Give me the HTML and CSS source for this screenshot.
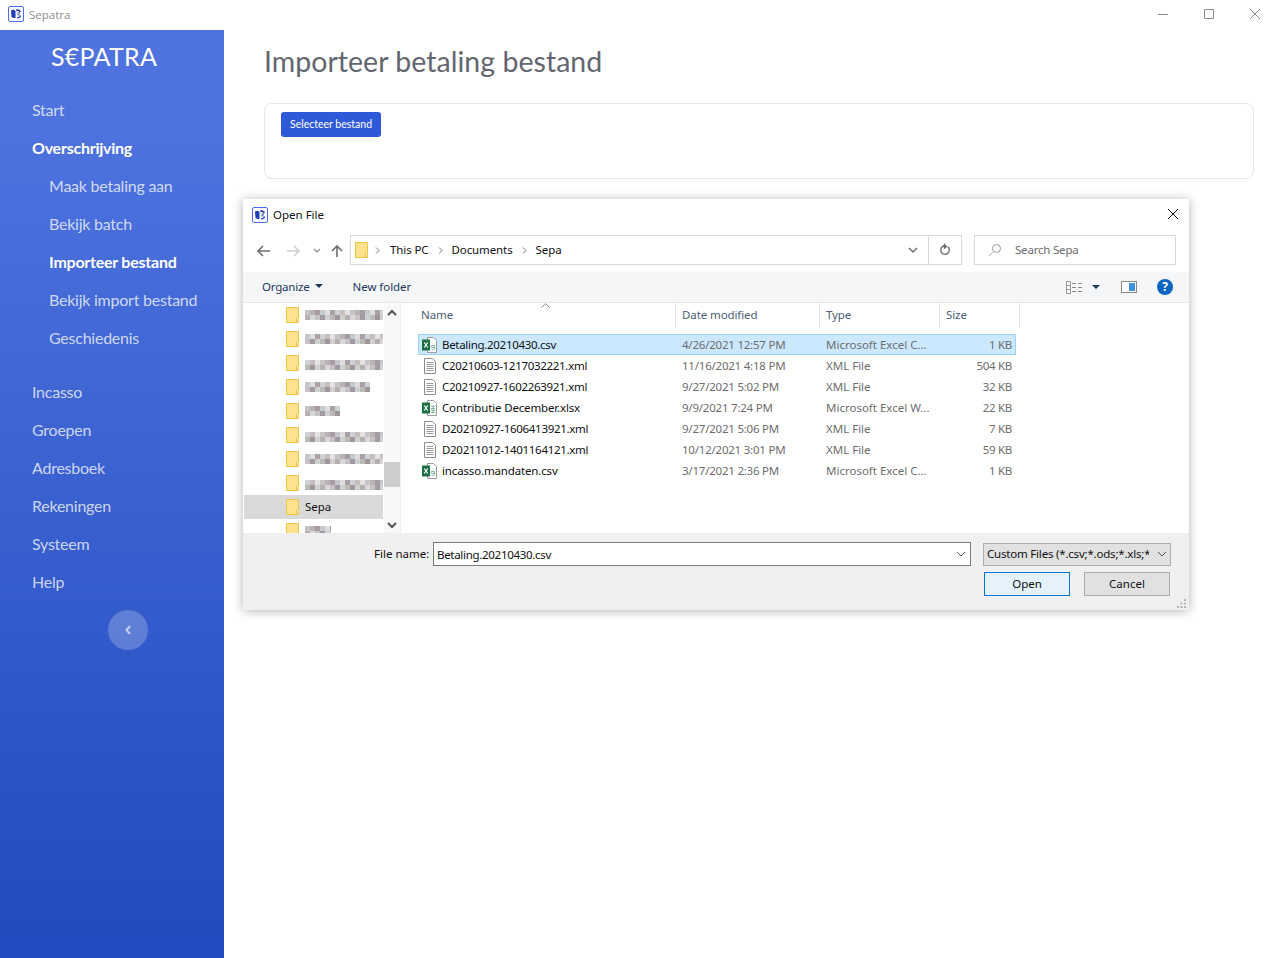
FILE: index.html
```html
<!DOCTYPE html>
<html lang="nl">
<head>
<meta charset="utf-8">
<title>Sepatra</title>
<link rel="stylesheet" href="styles.css">
</head>
<body>
<svg class="sprite" width="0" height="0" aria-hidden="true">
  <symbol id="app" viewBox="0 0 16 16">
    <rect x=".5" y=".5" width="15" height="15" rx="1.500" fill="#fff" stroke="#4a6cf0"/>
    <path d="M3 4.500c1-.8 2-1 3-.8l1.500 1.500V12c-1.500.3-3 0-4-1z" fill="#1f3fb5"/>
    <path d="M8 3.500c2.500-.8 4.600.4 5 2.500l-1.600.2C11 5 9.800 4.700 8.500 5.200z" fill="#1f3fb5"/>
    <path d="M9 12.500c2.300.4 4-.8 4.300-3l-1.500-.2c-.3 1.300-1.300 1.900-2.800 1.800z" fill="#3d5ee0"/>
    <path d="M9.500 7h2.500M9.500 8.800h2" stroke="#1f3fb5"/>
  </symbol>
  <symbol id="folder" viewBox="0 0 14 16">
    <path d="M.5.500h12v15H.5z" fill="#ffe28f" stroke="#efc540"/>
    <path d="M10.500 15.500V11h2.500" fill="#fff6d5" stroke="#efc540"/>
  </symbol>
  <symbol id="doc" viewBox="0 0 16 16">
    <path d="M2.500.500h8l3 3v12h-11z" fill="#fff" stroke="#8c8c8c"/>
    <path d="M4.500 4.500h7M4.500 6.500h7M4.500 8.500h7M4.500 10.500h7M4.500 12.500h7" stroke="#9a9a9a"/>
  </symbol>
  <symbol id="csv" viewBox="0 0 16 16">
    <path d="M5.500.500h6l3 3v12h-9z" fill="#fff" stroke="#9a9a9a"/>
    <rect x="0" y="2.500" width="8" height="11" fill="#1e7145"/>
    <path d="M2.300 5.500l3.400 5M5.700 5.500l-3.400 5" stroke="#fff" stroke-width="1.200"/>
    <path d="M9.500 12.500c2 .5 3 0 3-1.500v-2.500h-2.500c-1.500 0-1.500 2 0 2h2.500" fill="none" stroke="#7fb99a"/>
  </symbol>
  <symbol id="xlsx" viewBox="0 0 16 16">
    <path d="M5.500.500h6l3 3v12h-9z" fill="#fff" stroke="#9a9a9a"/>
    <rect x="0" y="2.500" width="8" height="11" fill="#1e7145"/>
    <path d="M2.300 5.500l3.400 5M5.700 5.500l-3.400 5" stroke="#fff" stroke-width="1.200"/>
    <path d="M9 6.500h4M9 8.500h4M9 10.500h4M9 12.500h4M11 5.500v8" stroke="#7fb99a"/>
  </symbol>
</svg>

<div class="app">
  <header class="titlebar">
    <svg class="ico16"><use href="#app"/></svg>
    <span class="titlebar-name">Sepatra</span>
    <div class="winctl">
      <svg width="12" height="12" viewBox="0 0 12 12"><path d="M1 6.500h10" stroke="#8a8a8a"/></svg>
      <svg width="12" height="12" viewBox="0 0 12 12"><path d="M1.500 1.500h9v9h-9z" fill="none" stroke="#8a8a8a"/></svg>
      <svg width="12" height="12" viewBox="0 0 12 12"><path d="M1 1l10 10M11 1L1 11" stroke="#8a8a8a"/></svg>
    </div>
  </header>

  <div class="shell">
    <nav class="sidebar">
      <div class="brand">S€PATRA</div>
      <ul class="menu">
        <li>Start</li>
        <li class="strong">Overschrijving</li>
        <li class="sub">Maak betaling aan</li>
        <li class="sub">Bekijk batch</li>
        <li class="sub strong">Importeer bestand</li>
        <li class="sub">Bekijk import bestand</li>
        <li class="sub">Geschiedenis</li>
      </ul>
      <ul class="menu menu-second">
        <li>Incasso</li>
        <li>Groepen</li>
        <li>Adresboek</li>
        <li>Rekeningen</li>
        <li>Systeem</li>
        <li>Help</li>
      </ul>
      <button class="collapse" type="button" aria-label="Inklappen">
        <svg width="8" height="10" viewBox="0 0 8 10"><path d="M6 1L2.500 5 6 9" fill="none" stroke="#c5d0f2" stroke-width="2"/></svg>
      </button>
    </nav>

    <main class="content">
      <h1>Importeer betaling bestand</h1>
      <section class="card">
        <button class="primary" type="button">Selecteer bestand</button>
      </section>
    </main>
  </div>

  <div class="dialog">
    <div class="dlg-title">
      <svg class="ico16"><use href="#app"/></svg>
      <span>Open File</span>
      <svg class="dlg-close" width="12" height="12" viewBox="0 0 12 12"><path d="M1 1l10 10M11 1L1 11" stroke="#111"/></svg>
    </div>

    <div class="dlg-nav">
      <svg class="nav-back" width="16" height="14" viewBox="0 0 16 14"><path d="M14 7H2M7 2L2 7l5 5" fill="none" stroke="#6d6d6d" stroke-width="1.600"/></svg>
      <svg class="nav-fwd" width="16" height="14" viewBox="0 0 16 14"><path d="M2 7h12M9 2l5 5-5 5" fill="none" stroke="#d0d0d0" stroke-width="1.600"/></svg>
      <svg class="nav-drop" width="8" height="6" viewBox="0 0 8 6"><path d="M1 1l3 3 3-3" fill="none" stroke="#8a8a8a" stroke-width="1.200"/></svg>
      <svg class="nav-up" width="14" height="14" viewBox="0 0 14 14"><path d="M7 13V2M2 7l5-5 5 5" fill="none" stroke="#6d6d6d" stroke-width="1.600"/></svg>
      <div class="address">
        <svg class="addr-folder"><use href="#folder"/></svg>
        <svg class="crumb-sep first" width="5" height="7" viewBox="0 0 5 7"><path d="M1 .5l3 3-3 3" fill="none" stroke="#777"/></svg>
        <span>This PC</span>
        <svg class="crumb-sep" width="5" height="7" viewBox="0 0 5 7"><path d="M1 .5l3 3-3 3" fill="none" stroke="#777"/></svg>
        <span>Documents</span>
        <svg class="crumb-sep" width="5" height="7" viewBox="0 0 5 7"><path d="M1 .5l3 3-3 3" fill="none" stroke="#777"/></svg>
        <span>Sepa</span>
        <svg class="addr-drop" width="10" height="7" viewBox="0 0 10 7"><path d="M1 1l4 4 4-4" fill="none" stroke="#6d6d6d" stroke-width="1.500"/></svg>
        <div class="addr-refresh">
          <svg width="12" height="14" viewBox="0 0 12 14"><path d="M8.800 3.800a4.300 4.300 0 1 1-3-1H7M5.500.500v4.500L8 3" fill="none" stroke="#6d6d6d" stroke-width="1.400"/></svg>
        </div>
      </div>
      <div class="search">
        <svg width="14" height="14" viewBox="0 0 14 14"><circle cx="8.500" cy="5.500" r="4" fill="none" stroke="#9a9a9a"/><path d="M5.500 8.500L1 13" stroke="#c8a98a"/></svg>
        <span>Search Sepa</span>
      </div>
    </div>

    <div class="dlg-tools">
      <span class="tool tool-org">Organize</span>
      <span class="tri"></span>
      <span class="tool tool-new">New folder</span>
      <svg class="t-view" width="17" height="13" viewBox="0 0 17 13"><path d="M.5.500h4v12h-4zM.5 4.500h4M.5 8.500h4" fill="none" stroke="#9a9a9a"/><path d="M6 2.500h4M12 2.500h4M6 6.500h4M12 6.500h4M6 10.500h4M12 10.500h4" stroke="#8a8a8a"/></svg>
      <span class="tri tri-dark"></span>
      <svg class="t-pane" width="16" height="12" viewBox="0 0 16 12"><rect x=".5" y=".5" width="15" height="11" fill="#fff" stroke="#8a8a8a"/><rect x="8" y="2" width="6" height="8" fill="#3f92e0"/></svg>
      <span class="help">?</span>
    </div>

    <div class="dlg-body">
      <div class="tree">
        <div class="tree-row"><svg class="tree-folder"><use href="#folder"/></svg><i class="blur w78"></i></div>
        <div class="tree-row"><svg class="tree-folder"><use href="#folder"/></svg><i class="blur w78 alt"></i></div>
        <div class="tree-row"><svg class="tree-folder"><use href="#folder"/></svg><i class="blur w78 alt2"></i></div>
        <div class="tree-row"><svg class="tree-folder"><use href="#folder"/></svg><i class="blur w65 alt"></i></div>
        <div class="tree-row"><svg class="tree-folder"><use href="#folder"/></svg><i class="blur w35"></i></div>
        <div class="tree-row"><svg class="tree-folder"><use href="#folder"/></svg><i class="blur w78 alt2"></i></div>
        <div class="tree-row"><svg class="tree-folder"><use href="#folder"/></svg><i class="blur w78 alt"></i></div>
        <div class="tree-row"><svg class="tree-folder"><use href="#folder"/></svg><i class="blur w78 alt2"></i></div>
        <div class="tree-row current"><svg class="tree-folder"><use href="#folder"/></svg><span>Sepa</span></div>
        <div class="tree-row"><svg class="tree-folder"><use href="#folder"/></svg><i class="blur w26"></i></div>
      </div>
      <div class="scrollbar">
        <svg width="10" height="7" viewBox="0 0 10 7"><path d="M1 6l4-4 4 4" fill="none" stroke="#555" stroke-width="2"/></svg>
        <div class="track"><div class="thumb"></div></div>
        <svg width="10" height="7" viewBox="0 0 10 7"><path d="M1 1l4 4 4-4" fill="none" stroke="#555" stroke-width="2"/></svg>
      </div>

      <div class="list">
        <div class="list-head">
          <span class="hd">Name<svg class="sort" width="9" height="5" viewBox="0 0 9 5"><path d="M.5 4.500l4-4 4 4" fill="none" stroke="#8a8a8a"/></svg></span>
          <span class="hd">Date modified</span>
          <span class="hd">Type</span>
          <span class="hd">Size</span>
        </div>
        <div class="row selected"><span class="name"><svg class="ico16"><use href="#csv"/></svg>Betaling.20210430.csv</span><span class="date">4/26/2021 12:57 PM</span><span class="type">Microsoft Excel C...</span><span class="size">1 KB</span></div>
        <div class="row"><span class="name"><svg class="ico16"><use href="#doc"/></svg>C20210603-1217032221.xml</span><span class="date">11/16/2021 4:18 PM</span><span class="type">XML File</span><span class="size">504 KB</span></div>
        <div class="row"><span class="name"><svg class="ico16"><use href="#doc"/></svg>C20210927-1602263921.xml</span><span class="date">9/27/2021 5:02 PM</span><span class="type">XML File</span><span class="size">32 KB</span></div>
        <div class="row"><span class="name plain"><svg class="ico16"><use href="#xlsx"/></svg>Contributie December.xlsx</span><span class="date">9/9/2021 7:24 PM</span><span class="type">Microsoft Excel W...</span><span class="size">22 KB</span></div>
        <div class="row"><span class="name"><svg class="ico16"><use href="#doc"/></svg>D20210927-1606413921.xml</span><span class="date">9/27/2021 5:06 PM</span><span class="type">XML File</span><span class="size">7 KB</span></div>
        <div class="row"><span class="name"><svg class="ico16"><use href="#doc"/></svg>D20211012-1401164121.xml</span><span class="date">10/12/2021 3:01 PM</span><span class="type">XML File</span><span class="size">59 KB</span></div>
        <div class="row"><span class="name plain"><svg class="ico16"><use href="#csv"/></svg>incasso.mandaten.csv</span><span class="date">3/17/2021 2:36 PM</span><span class="type">Microsoft Excel C...</span><span class="size">1 KB</span></div>
      </div>
    </div>

    <div class="dlg-foot">
      <div class="foot-line">
        <label class="fname-label">File name:</label>
        <div class="fname">
          <span class="fname-value">Betaling.20210430.csv</span>
          <svg width="10" height="6" viewBox="0 0 10 6"><path d="M1 1l4 4 4-4" fill="none" stroke="#555"/></svg>
        </div>
        <div class="ftype">
          <span class="ftype-value">Custom Files (*.csv;*.ods;*.xls;*</span>
          <svg width="10" height="6" viewBox="0 0 10 6"><path d="M1 1l4 4 4-4" fill="none" stroke="#555"/></svg>
        </div>
      </div>
      <div class="foot-actions">
        <button class="wbtn default" type="button">Open</button>
        <button class="wbtn" type="button">Cancel</button>
      </div>
      <svg class="grip" width="10" height="9" viewBox="0 0 10 9"><path d="M7 0h2v2H7zM3.500 3.500h2v2h-2zM7 3.500h2v2H7zM0 7h2v2H0zM3.500 7h2v2h-2zM7 7h2v2H7z" fill="#b5b5b5"/></svg>
    </div>
  </div>
</div>
</body>
</html>
```

FILE: styles.css
```css
* { box-sizing: border-box; }
html, body { margin: 0; height: 100%; background: #fff; }
body { font-family: "Lato", "Liberation Sans", sans-serif; overflow: hidden; }
.sprite { position: absolute; }
ul { list-style: none; margin: 0; padding: 0; }
button { font: inherit; cursor: default; }
.ico16 { width: 16px; height: 16px; flex: none; }

.app { height: 958px; display: flex; flex-direction: column; position: relative; }

.titlebar { height: 30px; flex: none; display: flex; align-items: center; padding: 0 0 2px 8px; }
.titlebar-name { margin-left: 5px; font: 11.500px "Open Sans", sans-serif; color: #8f8f8f; }
.winctl { margin-left: auto; display: flex; gap: 34px; padding-right: 17px; }

.shell { flex: 1; display: flex; min-height: 0; }

.sidebar { width: 224px; flex: none; background: linear-gradient(180deg, #4e73df 10%, #224abe 100%); display: flex; flex-direction: column; color: #fff; }
.brand { height: 54px; padding: 9px 0 0 51px; font-size: 25px; line-height: 34px; letter-spacing: .25px; }
.menu { padding-top: 7px; }
.menu li { height: 38px; line-height: 38px; padding-left: 32px; font-size: 16px; letter-spacing: -.24px; color: rgba(255, 255, 255, .74); }
.menu li.sub { padding-left: 49px; }
.menu li.strong { color: #fff; font-weight: 700; }
.menu-second { padding-top: 16px; }
.collapse { width: 40px; height: 40px; margin: 9px 0 0 108px; border: 0; border-radius: 50%; background: rgba(255, 255, 255, .22); display: flex; align-items: center; justify-content: center; padding: 0; }

.content { flex: 1; padding: 0 24px 0 40px; }
h1 { margin: 0; height: 73px; padding-top: 12px; font-size: 28.500px; line-height: 38px; font-weight: 400; color: #63656f; letter-spacing: .03px; }
.card { height: 76px; border: 1px solid #e3e6f0; border-radius: 8px; padding: 8px 16px; background: #fff; }
.primary { display: block; width: 100px; height: 25px; border: 0; border-radius: 3px; background: #2e59d9; color: #fff; font-size: 10.500px; line-height: 23px; padding: 0 0 1px; }

.dialog { position: absolute; left: 243px; top: 199px; width: 946px; height: 411px; background: #fff; box-shadow: 0 1px 10px rgba(0, 0, 0, .3); border: 1px solid transparent; border-bottom: 0; display: flex; flex-direction: column; font: 11.500px "Noto Sans", "Open Sans", sans-serif; color: #111; }

.dlg-title { height: 29px; flex: none; display: flex; align-items: center; padding-left: 8px; gap: 5px; }
.dlg-title span { padding-bottom: 1px; }
.dlg-close { margin: 0 9px 2px auto; }

.dlg-nav { height: 43px; flex: none; display: flex; align-items: center; padding: 0 12px 0 0; }
.nav-back { margin-left: 12px; }
.nav-fwd { margin-left: 13px; }
.nav-drop { margin-left: 12px; }
.nav-up { margin-left: 9px; }
.address { margin: -1px 0 0 6px; width: 612px; height: 30px; border: 1px solid #d9d9d9; display: flex; align-items: center; padding: 0 0 2px 4px; letter-spacing: -.1px; }
.addr-folder { width: 14px; height: 16px; flex: none; margin-top: 2px; }
.crumb-sep { margin: 2px 9px 0 9px; flex: none; }
.crumb-sep.first { margin-left: 6px; margin-right: 10px; }
.addr-drop { margin: 2px 10px 0 auto; }
.addr-refresh { width: 33px; height: 28px; margin-bottom: -2px; border-left: 1px solid #d9d9d9; display: flex; align-items: center; justify-content: center; }
.search { margin: -1px 0 0 12px; width: 202px; height: 30px; border: 1px solid #d9d9d9; display: flex; align-items: center; padding-left: 13px; gap: 13px; color: #6d6d6d; letter-spacing: -.2px; }
.search span { padding-bottom: 2px; }

.dlg-tools { height: 31px; flex: none; margin: 0 -1px; background: #f5f6f7; border-bottom: 1px solid #e5e5e5; display: flex; align-items: center; color: #1e395b; padding: 0 1px 2px 19px; }
.tool-org { letter-spacing: -.2px; }
.tri { width: 0; height: 0; border: 4px solid transparent; border-top: 4px solid #1e395b; border-bottom: 0; margin-left: 5px; }
.tool-new { margin-left: 30px; letter-spacing: -.05px; }
.t-view { margin-left: auto; margin-top: 2px; }
.tri-dark { margin-left: 9px; margin-top: 2px; }
.t-pane { margin-left: 21px; margin-top: 2px; }
.help { width: 16px; height: 16px; margin: 2px 15px 0 20px; border-radius: 50%; background: #0a64c2; color: #fff; font-weight: 700; font-size: 12px; line-height: 16px; text-align: center; }

.dlg-body { height: 230px; flex: none; display: flex; overflow: hidden; }
.tree { width: 140px; flex: none; overflow: hidden; border-right: 1px solid #fff; }
.tree-row { height: 24px; display: flex; align-items: center; padding-left: 42px; gap: 5px; }
.tree-row.current { background: #d9d9d9; }
.tree-row.current span { padding-bottom: 1px; }
.tree-folder { width: 14px; height: 16px; flex: none; }
.blur { display: block; height: 15px;
  background-image:
    linear-gradient(90deg, #c9c3c4 0 5px, #b9b3b8 5px 10px, #a89ba4 10px 15px, #c3c9cf 15px 20px, #ddd 20px 25px, #ab9fa6 25px 30px, #ced2d6 30px 35px, #c4bfbc 35px 40px, #e3e3e3 40px 45px),
    linear-gradient(90deg, #b7b0b3 0 5px, #d8d8d8 5px 10px, #c8c2c6 10px 15px, #a39aa0 15px 20px, #cfd2d2 20px 25px, #bdbbb5 25px 30px, #9f969c 30px 35px, #d0d0d0 35px 40px);
  background-size: 45px 5px, 40px 5px;
  background-position: 0 2px, 0 7px;
  background-repeat: repeat-x;
}
.blur.alt { background-position: -15px 2px, -10px 7px; }
.blur.alt2 { background-position: -30px 4px, -25px 9px; }
.w78 { width: 78px; }
.w65 { width: 65px; }
.w35 { width: 35px; }
.w26 { width: 26px; }

.scrollbar { width: 16px; flex: none; background: #f8f8f8; display: flex; flex-direction: column; align-items: center; padding: 6px 0 4px; }
.track { flex: 1; width: 100%; }
.thumb { width: 100%; height: 25px; margin-top: 146px; background: #cdcdcd; }

.list { flex: 1; border-left: 1px solid #ececec; padding-left: 14px; }
.list-head { display: grid; grid-template-columns: 261px 144px 120px 80px; height: 24px; margin-bottom: 7px; }
.hd { position: relative; padding-left: 6px; border-right: 1px solid #e5e5e5; line-height: 24px; color: #4c607a; letter-spacing: -.1px; }
.sort { position: absolute; left: 126px; top: 0; }
.row { display: grid; grid-template-columns: 258px 144px 120px 76px; height: 21px; width: 598px; margin-left: 3px; border: 1px solid transparent; align-items: center; color: #6d6d6d; line-height: 18px; white-space: nowrap; }
.row.selected { background: #cce8ff; border-color: #99d1ff; }
.name { display: flex; align-items: center; gap: 4px; padding-left: 3px; color: #111; letter-spacing: -.3px; }
.name.plain { letter-spacing: -.15px; }
.date { padding-left: 5px; letter-spacing: -.22px; }
.type { padding-left: 5px; }
.size { text-align: right; padding-right: 5px; letter-spacing: -.3px; }

.dlg-foot { flex: 1; margin: 0 -1px; background: #f0f0f0; position: relative; padding: 9px 0 0 1px; }
.foot-line { display: flex; align-items: center; height: 24px; }
.fname-label { margin-left: 130px; width: 59px; flex: none; padding-bottom: 1px; }
.fname { flex: none; width: 538px; height: 24px; background: #fff; border: 1px solid #7a7a7a; display: flex; align-items: center; justify-content: space-between; padding: 0 4px 0 3px; }
.fname-value { letter-spacing: -.3px; }
.ftype { flex: none; margin-left: 12px; width: 188px; height: 23px; background: #e1e1e1; border: 1px solid #adadad; display: flex; align-items: center; gap: 8px; padding: 0 3px; white-space: nowrap; overflow: hidden; }
.ftype-value { flex: 1; min-width: 0; overflow: hidden; letter-spacing: -.2px; padding-bottom: 1px; }
.ftype svg { flex: none; }
.foot-actions { display: flex; justify-content: flex-end; gap: 14px; margin: 6px 19px 0 0; }
.wbtn { width: 86px; height: 24px; padding: 0 0 2px; background: #e1e1e1; border: 1px solid #adadad; font: inherit; color: #111; }
.wbtn.default { background: #e5f1fb; border-color: #0078d7; }
.grip { position: absolute; right: 2px; bottom: 2px; }
```
